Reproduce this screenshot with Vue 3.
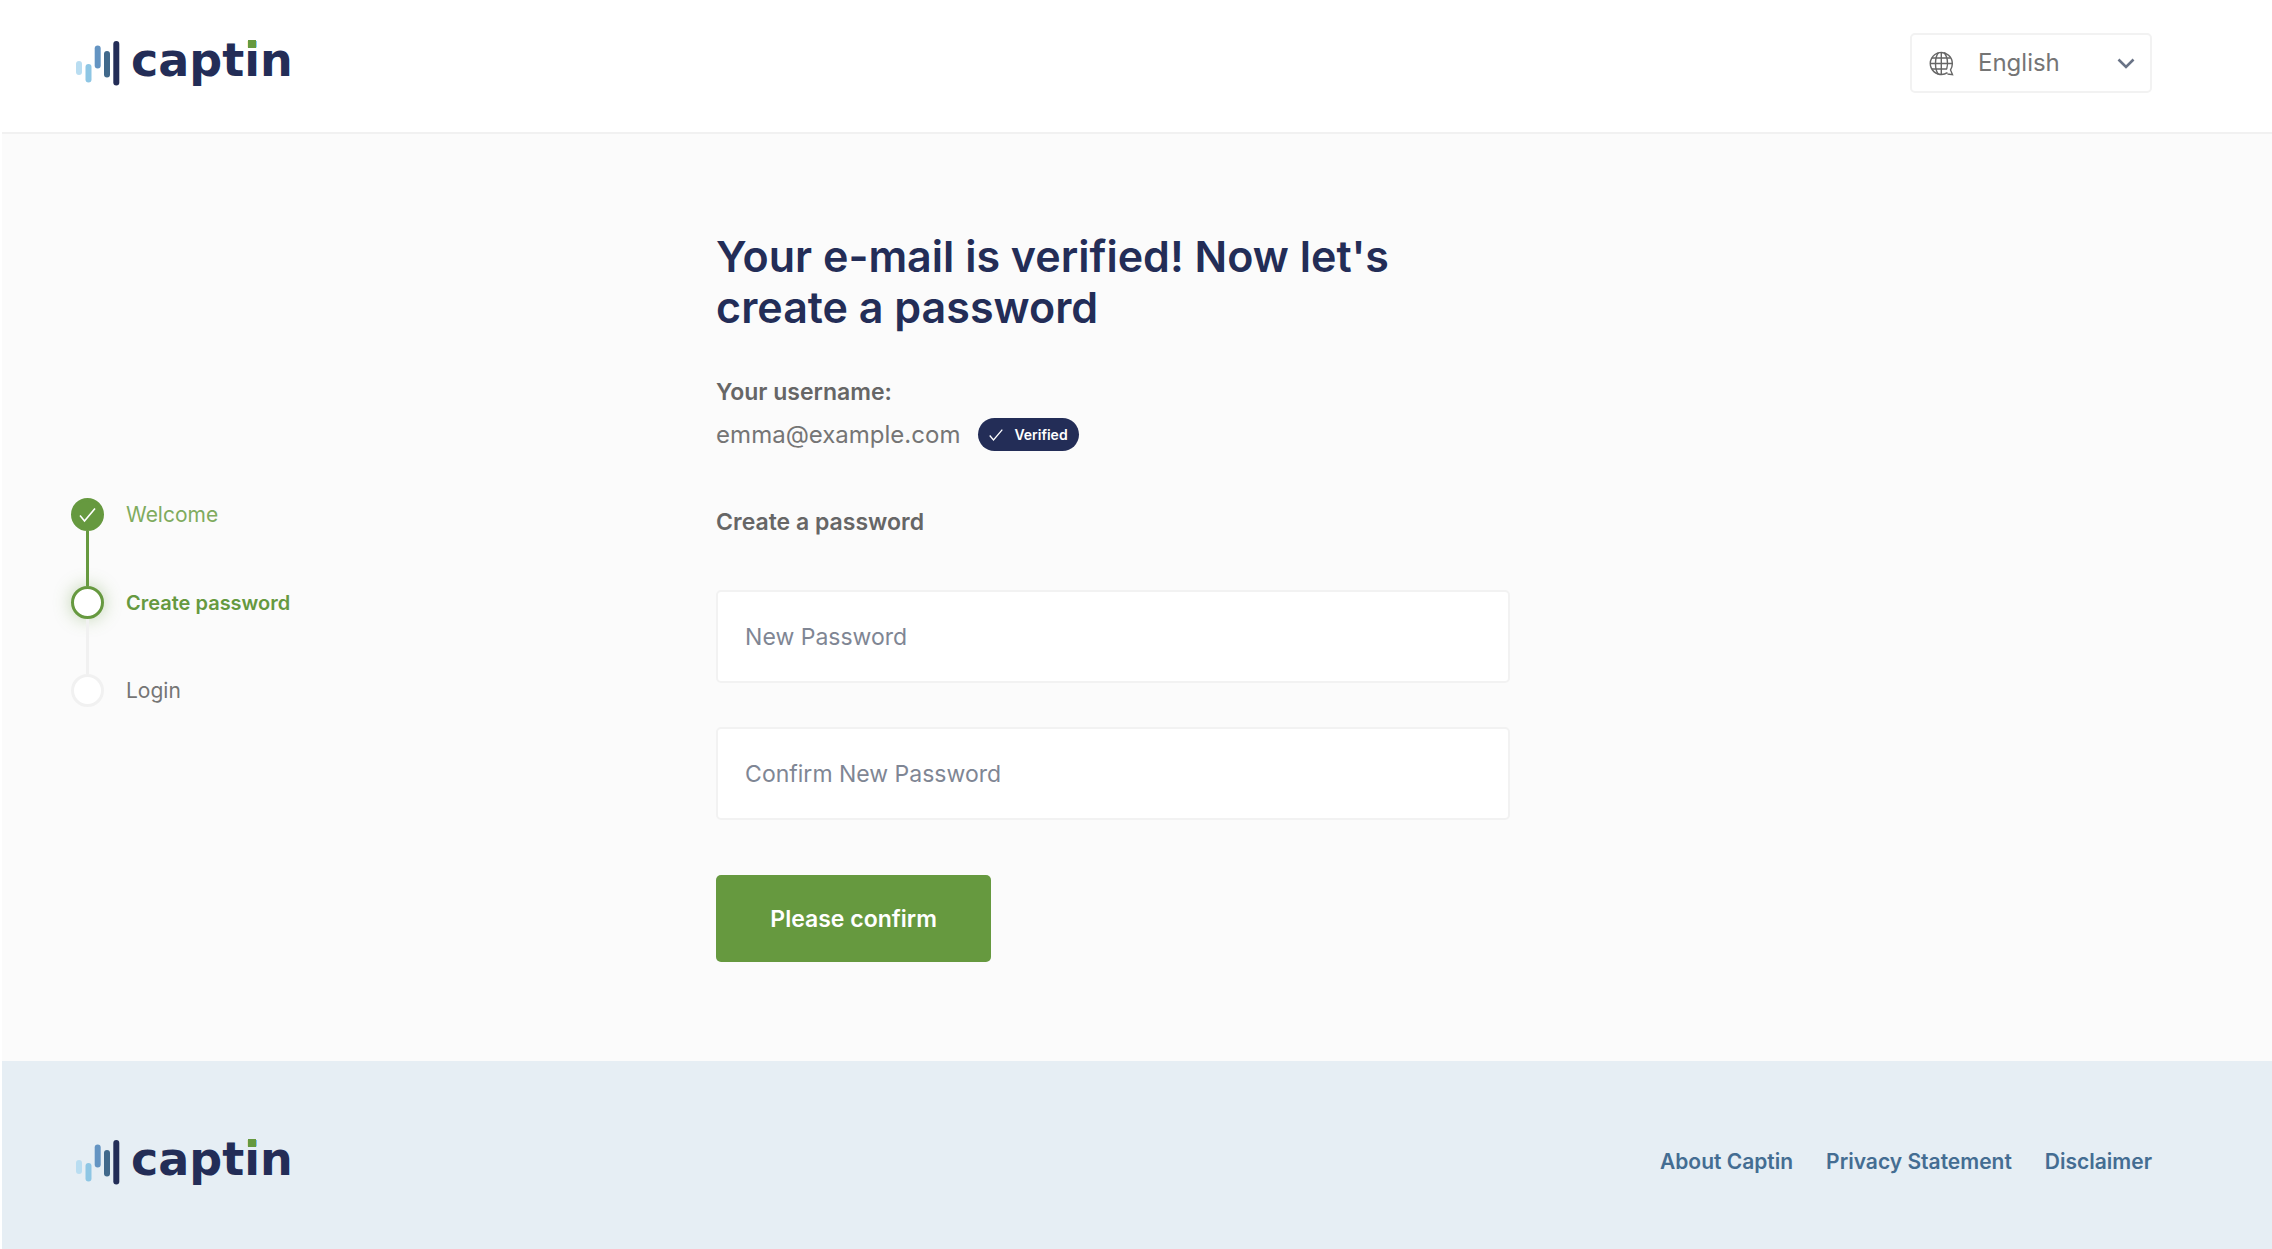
<script setup>
import { ref } from 'vue'

const language = ref('English')
const password = ref('')
const confirmation = ref('')

const steps = [
  { label: 'Welcome', state: 'done' },
  { label: 'Create password', state: 'current' },
  { label: 'Login', state: 'upcoming' },
]
const links = ['About Captin', 'Privacy Statement', 'Disclaimer']
</script>

<template>
  <div class="page">
    <header class="header">
      <a class="logo" href="#" aria-label="captin">
        <svg class="bars" width="44" height="46" viewBox="0 0 44 46" fill="none" stroke-width="6" stroke-linecap="round">
          <path d="M3 24v8" stroke="#b9ddf1" />
          <path d="M12.500 27v12.500" stroke="#8ec6e4" />
          <path d="M21.700 8.500v17" stroke="#6494c2" />
          <path d="M31 14v20.500" stroke="#41698b" />
          <path d="M40.300 4v38.500" stroke="#232d57" />
        </svg>
        <span class="word">capt<span class="dotted">i</span>n</span>
      </a>
      <div class="language">
        <svg class="globe" width="25" height="25" viewBox="0 0 25 25" fill="none" stroke="#666" stroke-width="1.400">
          <path d="M18.500 21.600A11 11 0 1 1 23.300 13c0 2.200-.7 4.200-1.800 5.900l2 4.700-5-.6" />
          <path d="M9.500 1.500C5.500 6.500 5.500 18.500 9.500 23.500M15.200 1.500c3.500 5 4 11 2.500 16.500M12.300 1.300v22.500M1.300 12.500h22M3 7h18.600M3 18h15" />
        </svg>
        <select v-model="language" class="select" aria-label="Language">
          <option>English</option>
          <option>Nederlands</option>
        </select>
        <svg class="chevron" width="18" height="12" viewBox="0 0 18 12" fill="none" stroke="#697386" stroke-width="2.600">
          <path d="M1.500 1.500 9 9l7.500-7.500" />
        </svg>
      </div>
    </header>

    <main class="main">
      <ol class="steps">
        <li v-for="step in steps" :key="step.label" class="step" :class="step.state">
          <span class="marker">
            <svg v-if="step.state === 'done'" width="17" height="16" viewBox="0 0 17 16" fill="none" stroke="#fff" stroke-width="1.600">
              <path d="M1 8.500 5.500 14 16 1.500" />
            </svg>
          </span>
          <span>{{ step.label }}</span>
        </li>
      </ol>

      <form class="form" @submit.prevent>
        <h1 class="title">Your e-mail is verified! Now let's create a password</h1>
        <p class="label">Your username:</p>
        <p class="user">
          <span>emma@example.com</span>
          <span class="badge">
            <svg width="14" height="12" viewBox="0 0 14 12" fill="none" stroke="#fff" stroke-width="1.300">
              <path d="M.7 6.500 4.500 11 13.300.7" />
            </svg>
            Verified
          </span>
        </p>
        <h2 class="label create">Create a password</h2>
        <input v-model="password" class="field" type="password" placeholder="New Password" aria-label="New Password" />
        <input v-model="confirmation" class="field" type="password" placeholder="Confirm New Password" aria-label="Confirm New Password" />
        <button class="confirm" type="submit">Please confirm</button>
      </form>
    </main>

    <footer class="footer">
      <a class="logo" href="#" aria-label="captin">
        <svg class="bars" width="44" height="46" viewBox="0 0 44 46" fill="none" stroke-width="6" stroke-linecap="round">
          <path d="M3 24v8" stroke="#b9ddf1" />
          <path d="M12.500 27v12.500" stroke="#8ec6e4" />
          <path d="M21.700 8.500v17" stroke="#6494c2" />
          <path d="M31 14v20.500" stroke="#41698b" />
          <path d="M40.300 4v38.500" stroke="#232d57" />
        </svg>
        <span class="word">capt<span class="dotted">i</span>n</span>
      </a>
      <nav class="links">
        <a v-for="link in links" :key="link" href="#">{{ link }}</a>
      </nav>
    </footer>
  </div>
</template>

<style>
body {
  margin: 0;
}
</style>

<style scoped>
.page {
  display: flex;
  flex-direction: column;
  min-height: 100vh;
  box-sizing: border-box;
  border-left: 2px solid #fff;
  background: #fbfbfb;
  color: #757575;
  font-family: Inter, "Open Sans", sans-serif;
  font-size: 23px;
  line-height: 32px;
}
.header,
.footer {
  display: flex;
  align-items: center;
  justify-content: space-between;
  box-sizing: border-box;
  padding: 0 120px 0 74px;
}
.header {
  height: 134px;
  padding-bottom: 6px;
  border-bottom: 2px solid #f1f1f1;
  background: #fff;
}
.footer {
  height: 188px;
  padding-top: 14px;
  background: #e6eef4;
}
.logo {
  display: flex;
  align-items: center;
  gap: 11px;
  color: #232d57;
  text-decoration: none;
}
.word {
  padding-bottom: 6px;
  font-family: "DejaVu Sans", sans-serif;
  font-size: 46px;
  font-weight: 700;
  line-height: 46px;
}
.dotted {
  position: relative;
}
.dotted::after {
  content: "";
  position: absolute;
  left: 4px;
  top: 7px;
  width: 8px;
  height: 8px;
  background: #66993f;
}
.language {
  position: relative;
}
.select {
  display: block;
  width: 242px;
  height: 60px;
  padding: 0 60px 0 66px;
  border: 2px solid #f2f2f2;
  border-radius: 5px;
  background: #fff;
  color: #757575;
  font: inherit;
  font-size: 24px;
  appearance: none;
}
.globe {
  position: absolute;
  left: 19px;
  top: 18px;
}
.chevron {
  position: absolute;
  right: 17px;
  top: 25px;
}
.main {
  display: grid;
  grid-template-columns: 31fr 69fr;
  flex: 1;
  padding: 97px 120px 98px 69px;
}
.steps {
  align-self: center;
  margin: 0;
  padding: 11px 0 0;
  list-style: none;
  font-size: 21px;
}
.step {
  display: flex;
  align-items: center;
  gap: 22px;
  position: relative;
  height: 33px;
}
.step + .step {
  margin-top: 55px;
}
.step + .step::before {
  content: "";
  position: absolute;
  left: 15px;
  bottom: 33px;
  width: 3px;
  height: 55px;
  background: #f1f1f1;
}
.step.current::before {
  background: #66993f;
}
.marker {
  display: flex;
  align-items: center;
  justify-content: center;
  box-sizing: border-box;
  width: 33px;
  height: 33px;
  border: 3px solid #f1f1f1;
  border-radius: 50%;
  background: #fff;
}
.done {
  color: #7fab5e;
}
.done .marker {
  border-color: #66993f;
  background: #66993f;
}
.current {
  color: #66993f;
  font-size: 20px;
  font-weight: 600;
}
.current .marker {
  border-color: #66993f;
  box-shadow: 0 0 18px rgba(102, 153, 63, 0.4);
}
.form {
  display: flex;
  flex-direction: column;
  align-items: flex-start;
  max-width: 794px;
}
.title {
  max-width: 720px;
  margin: 0 0 43px;
  color: #232d57;
  font-size: 43px;
  font-weight: 600;
  line-height: 51px;
}
.label {
  margin: 0;
  color: #666;
  font-size: 23px;
  font-weight: 600;
  line-height: 32px;
}
.user {
  display: flex;
  align-items: center;
  gap: 18px;
  margin: 10px 0 55px;
  font-size: 24px;
}
.badge {
  display: flex;
  align-items: center;
  gap: 11px;
  height: 33px;
  padding: 0 11px;
  border-radius: 17px;
  background: #232d57;
  color: #fff;
  font-size: 14px;
  font-weight: 600;
}
.create {
  margin-bottom: 52px;
}
.field {
  box-sizing: border-box;
  width: 100%;
  height: 93px;
  margin-bottom: 44px;
  padding: 0 27px;
  border: 2px solid #f2f2f2;
  border-radius: 5px;
  background: #fff;
  color: #757575;
  font: inherit;
}
.field::placeholder {
  color: #7f8694;
}
.confirm {
  min-width: 275px;
  height: 87px;
  margin-top: 11px;
  padding: 0 50px;
  border: 0;
  border-radius: 5px;
  background: #66993f;
  color: #fff;
  font: inherit;
  font-weight: 600;
}
.links {
  display: flex;
  gap: 33px;
  font-size: 21px;
  font-weight: 600;
}
.links a {
  color: #446d92;
  text-decoration: none;
}
</style>
